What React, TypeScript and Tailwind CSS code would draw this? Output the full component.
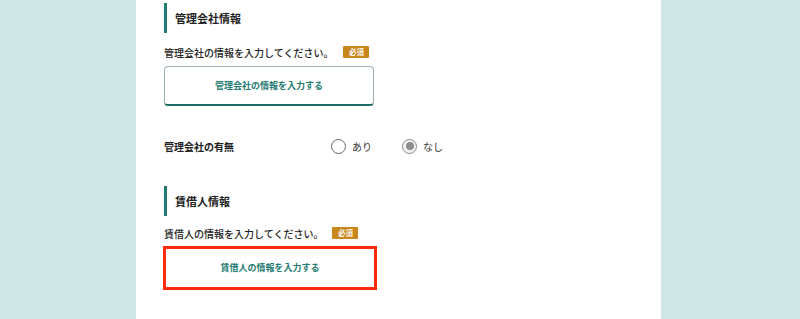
import React from "react";

const font = { fontFamily: '"Noto Sans CJK JP", "Noto Sans", sans-serif' };

function Heading({ children, className = "" }: { children: React.ReactNode; className?: string }) {
  return (
    <div className={`flex h-[30px] items-center border-l-[3px] border-[#1f7a72] pl-[8px] ${className}`}>
      <span className="text-[11px] font-bold leading-none text-[#222]">{children}</span>
    </div>
  );
}

function Required() {
  return (
    <span className="inline-flex h-[12px] w-[26px] items-center justify-center rounded-[1px] bg-[#c9861a] text-[7.5px] font-bold leading-none text-white">
      必須
    </span>
  );
}

function Radio({ label, checked }: { label: string; checked?: boolean }) {
  return (
    <label className="flex items-center gap-[6px]">
      <span
        className={`flex h-[15px] w-[15px] items-center justify-center rounded-full border ${
          checked ? "border-[#8a8a8a] bg-[#f2f2f2]" : "border-[#666] bg-white"
        }`}
      >
        {checked && <span className="h-[8px] w-[8px] rounded-full bg-[#8d8d8d]" />}
      </span>
      <span className="text-[10px] text-[#333]">{label}</span>
    </label>
  );
}

export default function App() {
  return (
    <div className="flex h-[319px] w-[800px] justify-start bg-[#cfe6e7]" style={font}>
      <div className="ml-[136px] h-full w-[525px] bg-white pl-[28px] pt-[3px]">
        <Heading>管理会社情報</Heading>

        <div className="mt-[11px] flex h-[16px] items-center gap-[10px]">
          <span className="text-[10px] font-medium text-[#222]">管理会社の情報を入力してください。</span>
          <Required />
        </div>

        <button className="mt-[6px] flex h-[40px] w-[210px] items-center justify-center rounded-[4px] border border-[#9fb3b3] border-b-2 border-b-[#1f6a64] bg-white">
          <span className="text-[9px] font-bold text-[#1f7a72]">管理会社の情報を入力する</span>
        </button>

        <div className="mt-[32px] flex h-[16px] items-center">
          <span className="w-[167px] text-[10px] font-bold text-[#222]">管理会社の有無</span>
          <div className="flex items-center gap-[30px]">
            <Radio label="あり" />
            <Radio label="なし" checked />
          </div>
        </div>

        <Heading className="mt-[32px]">賃借人情報</Heading>

        <div className="mt-[9px] flex h-[16px] items-center gap-[9px]">
          <span className="text-[10px] font-medium text-[#222]">賃借人の情報を入力してください。</span>
          <Required />
        </div>

        <button className="ml-[-1px] mt-[5px] flex h-[44px] w-[214px] items-center justify-center border-[3.5px] border-[#ff2a0a] bg-white">
          <span className="text-[9px] font-bold text-[#1f7a72]">賃借人の情報を入力する</span>
        </button>
      </div>
    </div>
  );
}
